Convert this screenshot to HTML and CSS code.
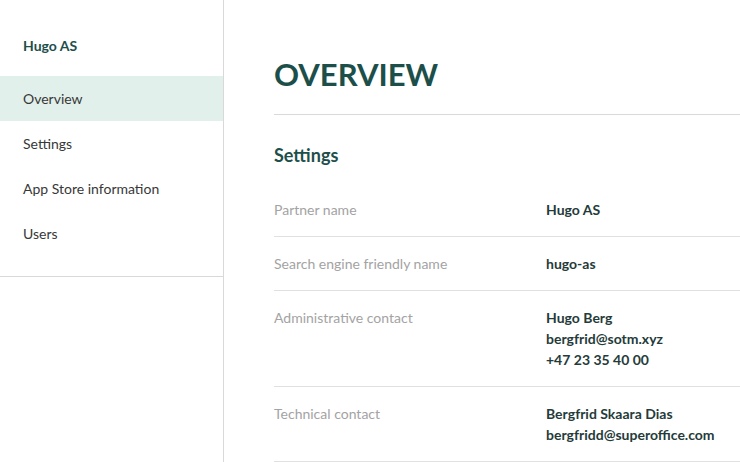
FILE: index.html
```html
<!DOCTYPE html>
<html lang="en">
<head>
<meta charset="utf-8">
<title>Overview</title>
<link rel="stylesheet" href="styles.css">
</head>
<body>
<div class="layout">
  <aside class="sidebar">
    <div class="sidebar-top">
      <div class="company">Hugo AS</div>
      <nav class="nav">
        <a class="nav-item active" href="#">Overview</a>
        <a class="nav-item" href="#">Settings</a>
        <a class="nav-item" href="#">App Store information</a>
        <a class="nav-item" href="#">Users</a>
      </nav>
    </div>
  </aside>
  <main class="main">
    <h1 class="title">OVERVIEW</h1>
    <section class="section">
      <h2 class="section-title">Settings</h2>
      <dl class="rows">
        <div class="row">
          <dt class="label">Partner name</dt>
          <dd class="value">Hugo AS</dd>
        </div>
        <div class="row">
          <dt class="label">Search engine friendly name</dt>
          <dd class="value">hugo-as</dd>
        </div>
        <div class="row">
          <dt class="label">Administrative contact</dt>
          <dd class="value">Hugo Berg<br>bergfrid@sotm.xyz<br>+47 23 35 40 00</dd>
        </div>
        <div class="row">
          <dt class="label">Technical contact</dt>
          <dd class="value">Bergfrid Skaara Dias<br>bergfridd@superoffice.com</dd>
        </div>
      </dl>
    </section>
  </main>
</div>
</body>
</html>
```
FILE: styles.css
```css
* { box-sizing: border-box; }
html, body { margin: 0; padding: 0; }
body {
  font-family: Lato, "Open Sans", sans-serif;
  background: #fff;
  color: #333;
}
.layout {
  display: flex;
  min-height: 462px;
}
.sidebar {
  width: 224px;
  flex: 0 0 224px;
  border-right: 1px solid #d9d9d9;
}
.sidebar-top {
  border-bottom: 1px solid #d9d9d9;
  padding-top: 36px;
  padding-bottom: 20px;
}
.company {
  padding: 0 23px;
  font-size: 14px;
  font-weight: 700;
  color: #1e4f4b;
  line-height: 20px;
  margin-bottom: 20px;
}
.nav { display: flex; flex-direction: column; }
.nav-item {
  display: block;
  height: 45px;
  line-height: 45px;
  padding: 0 23px;
  font-size: 14px;
  color: #383838;
  text-decoration: none;
}
.nav-item.active { background: #e1f0ea; }
.main {
  flex: 1;
  padding: 52px 0 0 50px;
  min-width: 0;
}
.title {
  margin: 0;
  font-size: 31px;
  font-weight: 700;
  line-height: 44px;
  color: #1d4f4a;
  padding-bottom: 18px;
  border-bottom: 1px solid #d9d9d9;
}
.section-title {
  margin: 27px 0 0;
  font-size: 18px;
  font-weight: 700;
  line-height: 26px;
  color: #1e4f4b;
  padding-bottom: 15px;
}
.rows { margin: 0; }
.row {
  display: grid;
  grid-template-columns: 272px 1fr;
  padding: 16px 0;
  border-bottom: 1px solid #e0e0e0;
  line-height: 21px;
  font-size: 14px;
}
.label {
  margin: 0;
  font-size: 14px;
  color: #a3a3a3;
}
.value {
  margin: 0;
  font-weight: 700;
  color: #253b3a;
}
```
